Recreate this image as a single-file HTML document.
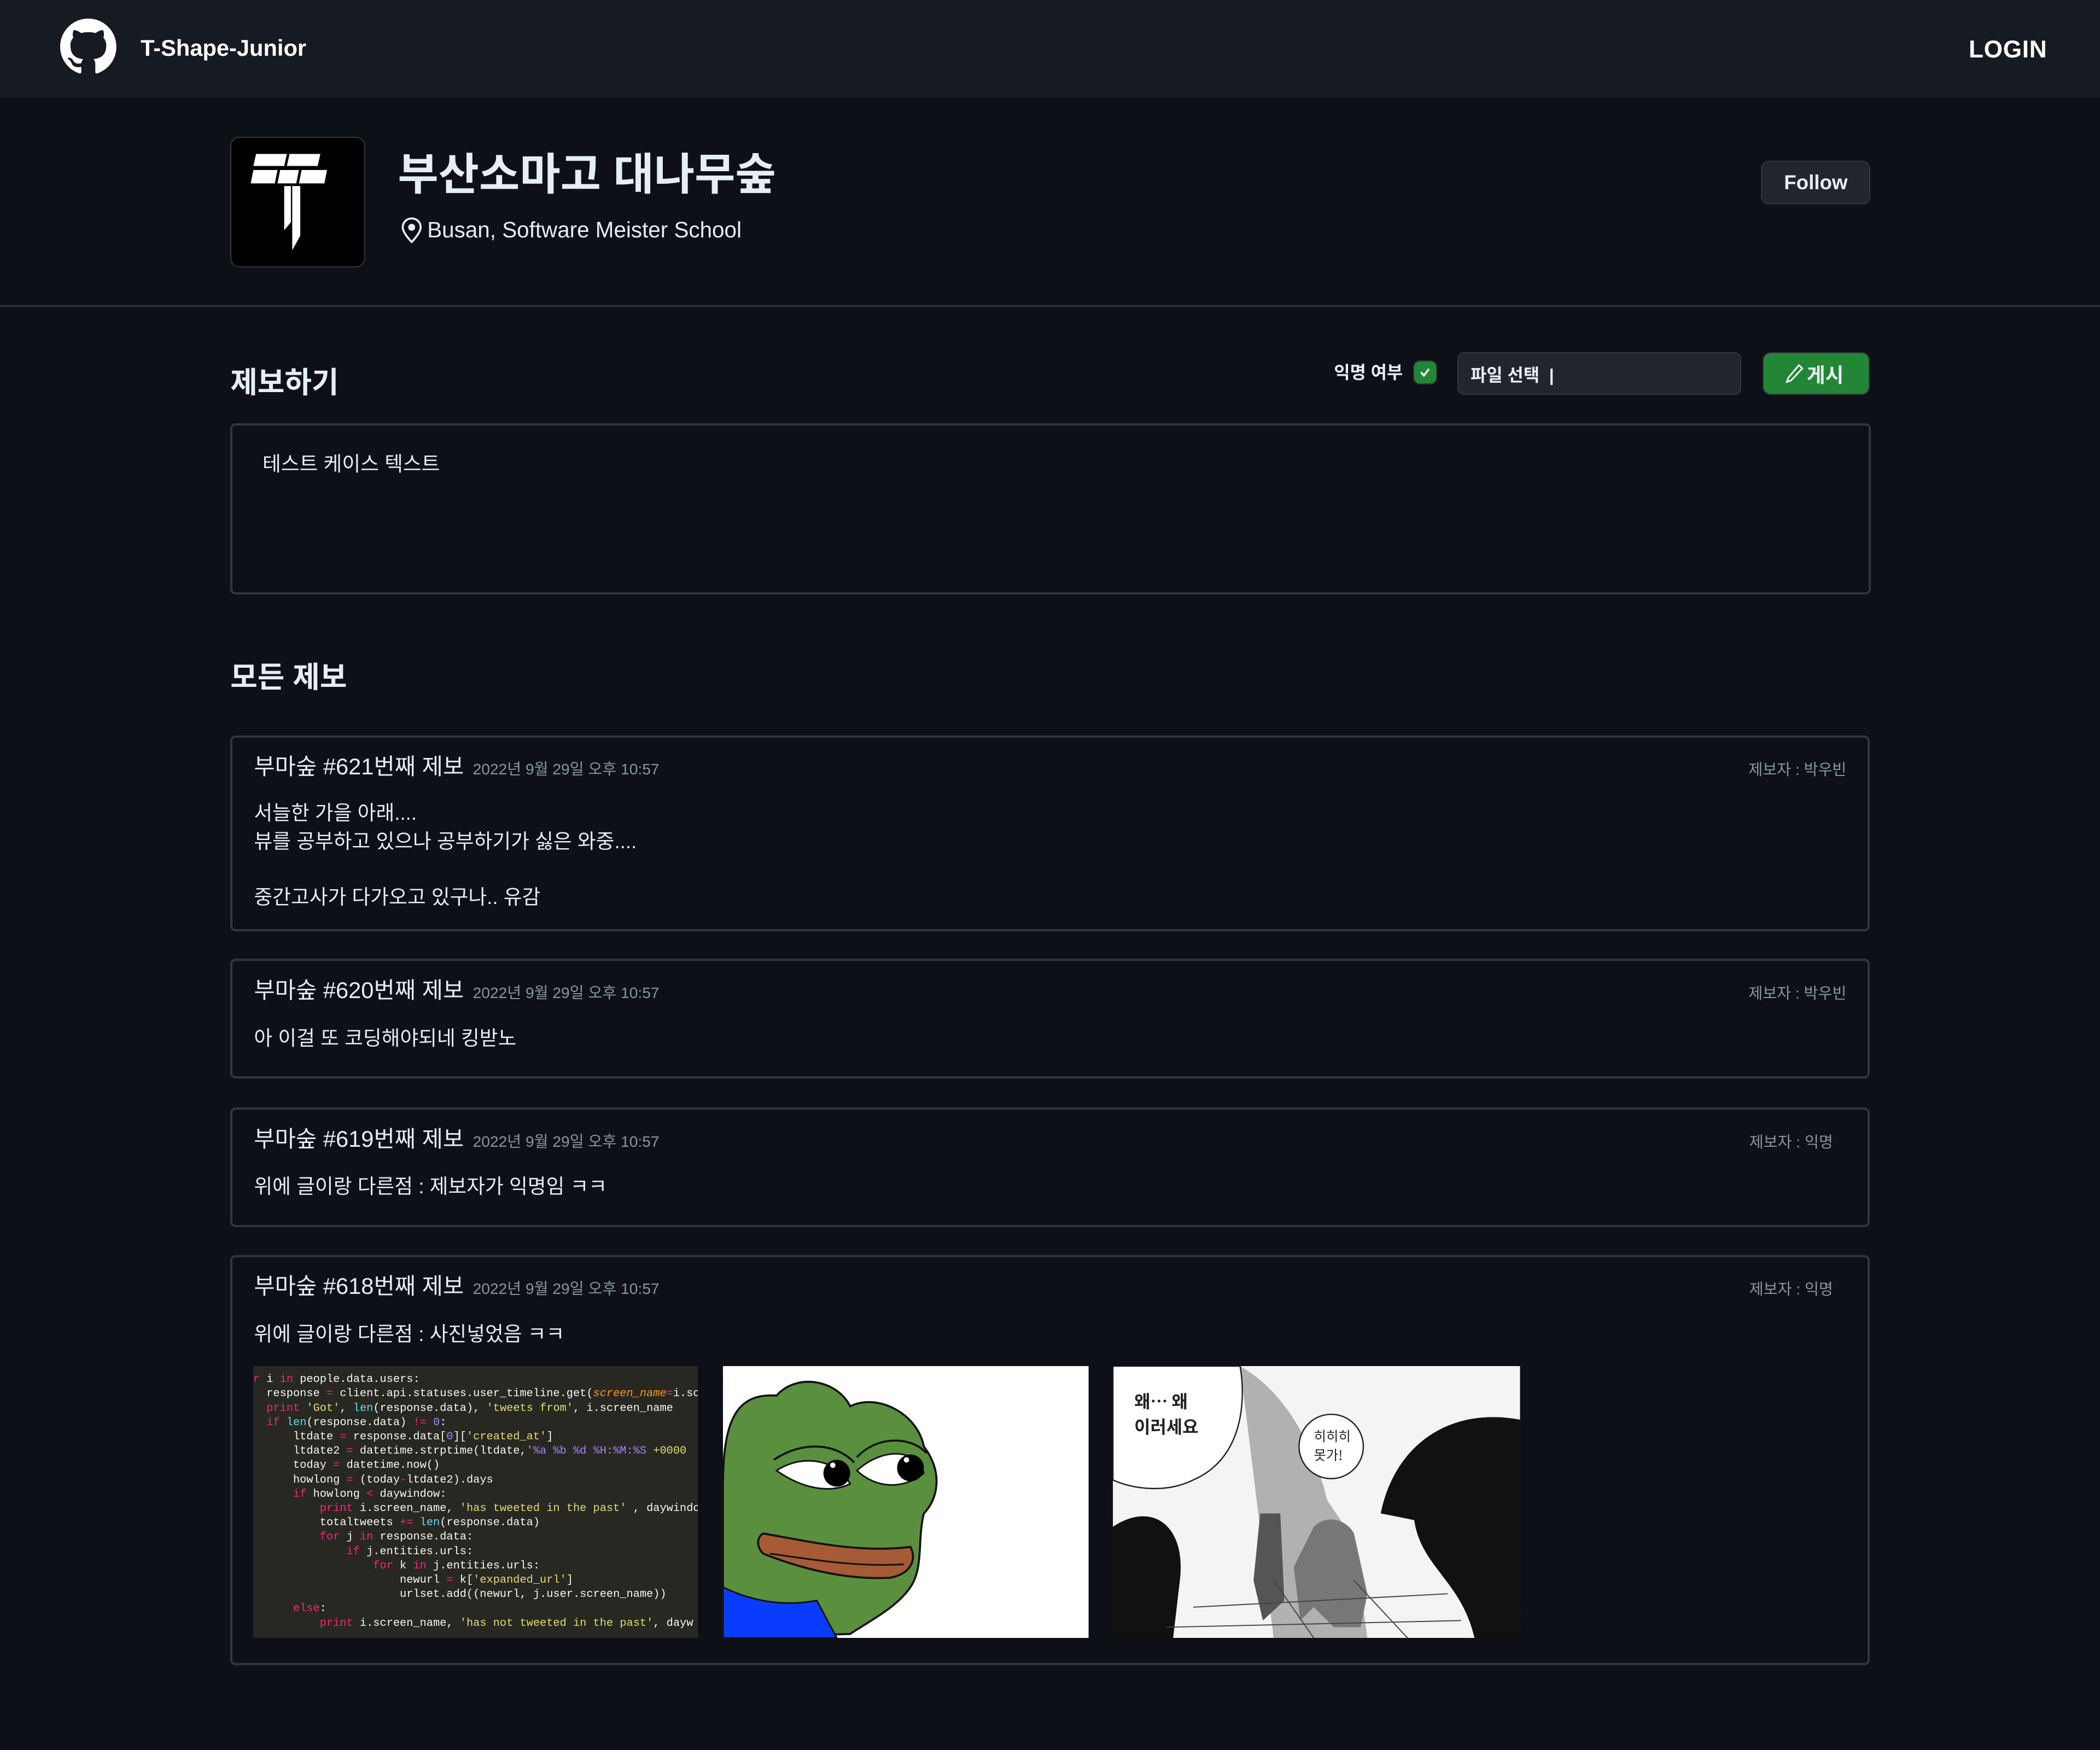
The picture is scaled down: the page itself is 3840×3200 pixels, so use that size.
<!DOCTYPE html>
<html><head><meta charset="utf-8">
<style>
html,body{margin:0;padding:0;background:#0d1117;width:3840px;height:3200px;overflow:hidden}
#z{zoom:2.449;width:1568px;height:1307px;position:relative;font-family:"Liberation Sans","Noto Sans CJK KR",sans-serif;color:#e6edf3}
.a{position:absolute;white-space:nowrap}
.hdr{position:absolute;left:0;top:0;width:1568px;height:73px;background:#161b22}
.card{position:absolute;left:172px;width:1221px;border:2px solid #30363d;border-radius:4px}
.t{position:absolute;left:16px;top:12px;font-size:17px;line-height:20px;white-space:nowrap}
.t span{font-size:11.5px;color:#8b949e;margin-left:2px}
.w{position:absolute;right:16px;top:15px;font-size:11.5px;color:#8b949e;white-space:nowrap}
.b{position:absolute;left:16px;font-size:15px;white-space:nowrap;line-height:21px}
.code{position:absolute;left:189px;top:1020px;width:332px;height:203px;background:#272822;overflow:hidden;font-family:"Liberation Mono",monospace;font-size:8.3px;line-height:10.7px;color:#f8f8f2;padding-top:5px;box-sizing:border-box}
.code div{white-space:pre}
.k{color:#f92672}.s{color:#e6db74}.f{color:#66d9ef}.n{color:#ae81ff}.o{color:#fd971f;font-style:italic}
</style></head><body><div id="z">
<div class="hdr"></div>
<svg class="a" style="left:45px;top:14px" width="42" height="42" viewBox="0 0 16 16"><path fill="#fff" d="M8 0C3.580 0 0 3.580 0 8c0 3.540 2.290 6.530 5.470 7.590.4.07.55-.17.55-.38 0-.19-.01-.82-.01-1.490-2.010.37-2.530-.49-2.690-.94-.09-.23-.48-.94-.82-1.130-.28-.15-.68-.52-.01-.53.63-.01 1.080.58 1.230.82.72 1.210 1.870.87 2.330.66.07-.52.28-.87.51-1.070-1.780-.2-3.640-.89-3.640-3.950 0-.87.31-1.590.82-2.150-.08-.2-.36-1.020.08-2.120 0 0 .67-.21 2.200.82.64-.18 1.320-.27 2-.27.68 0 1.360.09 2 .27 1.530-1.040 2.200-.82 2.200-.82.44 1.100.16 1.920.08 2.120.51.56.82 1.270.82 2.150 0 3.070-1.870 3.750-3.650 3.950.29.25.54.73.54 1.480 0 1.070-.01 1.930-.01 2.200 0 .21.15.46.55.38A8.013 8.013 0 0016 8c0-4.420-3.580-8-8-8z"/></svg>
<div class="a" style="left:105px;top:26px;font-size:17px;font-weight:bold;color:#fff">T-Shape-Junior</div>
<div class="a" style="left:1470px;top:27px;font-size:18px;font-weight:bold;color:#fff;letter-spacing:.3px">LOGIN</div>

<div class="a" style="left:172px;top:102px;width:99px;height:96px;background:#000;border:1px solid #30363d;border-radius:7px"></div>
<svg class="a" style="left:186px;top:114px" width="74" height="74" viewBox="0 0 74 74"><g fill="#fff"><polygon points="5,1 28,1 26,10 3,10"/><polygon points="30,1 53,1 51,10 28,10"/><polygon points="3,13 21,13 19,23 1,23"/><polygon points="23,13 37,13 35,23 21,23"/><polygon points="39,13 58,13 56,23 37,23"/><polygon points="26,25 31,25 31,52 26,58"/><polygon points="32,25 38,25 38,62 32,73 32,50"/></g></svg>
<div class="a" style="left:297px;top:109px;font-size:33px;font-weight:bold;color:#e6edf3;line-height:44px">부산소마고 대나무숲</div>
<svg class="a" style="left:299px;top:162px" width="17" height="20" viewBox="0 0 17 20"><path d="M8.5 1C4.600 1 1.800 4 1.800 7.600c0 4.300 6.700 11 6.700 11s6.700-6.700 6.700-11C15.200 4 12.400 1 8.500 1z" fill="none" stroke="#e6edf3" stroke-width="1.500"/><circle cx="8.5" cy="7.6" r="2.6" fill="#e6edf3"/></svg>
<div class="a" style="left:319px;top:162px;font-size:16.5px;color:#e6edf3">Busan, Software Meister School</div>
<div class="a" style="left:1315px;top:120px;width:80px;height:31px;background:#21262d;border:1px solid #30363d;border-radius:6px;font-size:15px;font-weight:bold;text-align:center;line-height:31px">Follow</div>
<div class="a" style="left:0;top:228px;width:1568px;height:1px;background:#30363d"></div>

<div class="a" style="left:172px;top:268px;font-size:22px;font-weight:bold">제보하기</div>
<div class="a" style="left:996px;top:268px;font-size:13px;font-weight:bold">익명 여부</div>
<div class="a" style="left:1055px;top:269px;width:18px;height:18px;background:#238636;border:1px solid #30363d;border-radius:5px;box-sizing:border-box"></div>
<svg class="a" style="left:1058px;top:272px" width="12" height="12" viewBox="0 0 12 12"><path d="M3 6l2.2 2.5L9 3.5" fill="none" stroke="#fff" stroke-width="1.4"/></svg>
<div class="a" style="left:1088px;top:263px;width:212px;height:32px;background:#21262d;border:1px solid #30363d;border-radius:5px;box-sizing:border-box"></div>
<div class="a" style="left:1098px;top:270px;font-size:13px;font-weight:bold">파일 선택 &nbsp;|</div>
<div class="a" style="left:1316px;top:263px;width:80px;height:32px;background:#238636;border:1px solid #30363d;border-radius:6px;box-sizing:border-box"></div>
<svg class="a" style="left:1333px;top:271px" width="14" height="16" viewBox="0 0 14 16"><path d="M10 1.5l2.5 2.5L4 13l-3 1 1-3z" fill="none" stroke="#fff" stroke-width="1.2"/></svg>
<div class="a" style="left:1349px;top:268px;font-size:15px;font-weight:bold">게시</div>
<div class="a" style="left:172px;top:316px;width:1225px;height:128px;border:2px solid #30363d;border-radius:4px;box-sizing:border-box"></div>
<div class="a" style="left:196px;top:334px;font-size:15px">테스트 케이스 텍스트</div>

<div class="a" style="left:172px;top:488px;font-size:22px;font-weight:bold">모든 제보</div>

<div class="card" style="top:549px;height:143px">
<div class="t">부마숲 #621번째 제보 <span>2022년 9월 29일 오후 10:57</span></div>
<div class="w">제보자 : 박우빈</div>
<div class="b" style="top:46px">서늘한 가을 아래....<br>뷰를 공부하고 있으나 공부하기가 싫은 와중....<br><br>중간고사가 다가오고 있구나.. 유감</div>
</div>
<div class="card" style="top:716px;height:86px">
<div class="t">부마숲 #620번째 제보 <span>2022년 9월 29일 오후 10:57</span></div>
<div class="w">제보자 : 박우빈</div>
<div class="b" style="top:47px">아 이걸 또 코딩해야되네 킹받노</div>
</div>
<div class="card" style="top:827px;height:86px">
<div class="t">부마숲 #619번째 제보 <span>2022년 9월 29일 오후 10:57</span></div>
<div class="w" style="right:26px">제보자 : 익명</div>
<div class="b" style="top:47px">위에 글이랑 다른점 : 제보자가 익명임 ㅋㅋ</div>
</div>
<div class="card" style="top:937px;height:303px">
<div class="t">부마숲 #618번째 제보 <span>2022년 9월 29일 오후 10:57</span></div>
<div class="w" style="right:26px">제보자 : 익명</div>
<div class="b" style="top:47px">위에 글이랑 다른점 : 사진넣었음 ㅋㅋ</div>
</div>

<div class="code">
<div><span class="k">r</span> i <span class="k">in</span> people.data.users:</div>
<div>  response <span class="k">=</span> client.api.statuses.user_timeline.get(<span class="o">screen_name</span><span class="k">=</span>i.sc</div>
<div>  <span class="k">print</span> <span class="s">'Got'</span>, <span class="f">len</span>(response.data), <span class="s">'tweets from'</span>, i.screen_name</div>
<div>  <span class="k">if</span> <span class="f">len</span>(response.data) <span class="k">!=</span> <span class="n">0</span>:</div>
<div>      ltdate <span class="k">=</span> response.data[<span class="n">0</span>][<span class="s">'created_at'</span>]</div>
<div>      ltdate2 <span class="k">=</span> datetime.strptime(ltdate,<span class="n">'%a %b %d %H:%M:%S</span> <span class="s">+0000</span></div>
<div>      today <span class="k">=</span> datetime.now()</div>
<div>      howlong <span class="k">=</span> (today<span class="k">-</span>ltdate2).days</div>
<div>      <span class="k">if</span> howlong <span class="k">&lt;</span> daywindow:</div>
<div>          <span class="k">print</span> i.screen_name, <span class="s">'has tweeted in the past'</span> , daywindo</div>
<div>          totaltweets <span class="k">+=</span> <span class="f">len</span>(response.data)</div>
<div>          <span class="k">for</span> j <span class="k">in</span> response.data:</div>
<div>              <span class="k">if</span> j.entities.urls:</div>
<div>                  <span class="k">for</span> k <span class="k">in</span> j.entities.urls:</div>
<div>                      newurl <span class="k">=</span> k[<span class="s">'expanded_url'</span>]</div>
<div>                      urlset.add((newurl, j.user.screen_name))</div>
<div>      <span class="k">else</span>:</div>
<div>          <span class="k">print</span> i.screen_name, <span class="s">'has not tweeted in the past'</span>, dayw</div>
</div>

<svg class="a" style="left:540px;top:1020px" width="273" height="203" viewBox="0 0 273 203">
<rect width="273" height="203" fill="#fff"/>
<path d="M0 195 L0 90 C0 40 10 20 40 22 C55 5 85 10 95 30 C115 20 145 35 150 60 C165 80 160 100 150 110 C145 130 150 150 140 165 C130 180 110 190 95 200 L0 203Z" fill="#5a8f3e" stroke="#111" stroke-width="1.5"/>
<path d="M0 165 C20 175 45 180 70 175 L85 203 L0 203Z" fill="#0a3cff" stroke="#111" stroke-width="1.2"/>
<path d="M30 125 C60 130 100 140 140 135 C145 145 140 155 125 158 C90 160 55 150 30 140 C25 135 25 128 30 125Z" fill="#a65a35" stroke="#111" stroke-width="1.5"/>
<path d="M35 140 C70 145 100 150 135 148" fill="none" stroke="#111" stroke-width="1.2"/>
<path d="M40 78 C60 65 85 70 95 88 C80 95 60 92 40 78Z" fill="#fff" stroke="#111" stroke-width="1.2"/>
<path d="M100 78 C120 60 145 62 150 80 C135 92 115 92 100 78Z" fill="#fff" stroke="#111" stroke-width="1.2"/>
<circle cx="85" cy="80" r="10" fill="#000"/><circle cx="140" cy="76" r="10" fill="#000"/>
<circle cx="82" cy="74" r="2" fill="#fff"/><circle cx="137" cy="70" r="2" fill="#fff"/>
<path d="M38 70 C60 55 85 58 98 72 M100 68 C115 52 140 52 152 65" fill="none" stroke="#111" stroke-width="1.5"/>
</svg>

<svg class="a" style="left:831px;top:1020px" width="304" height="203" viewBox="0 0 304 203">
<rect width="304" height="203" fill="#f4f4f4"/>
<path d="M95 0 C130 20 150 60 160 100 L180 130 L190 203 L120 203 Z" fill="#7a7a7a" opacity=".55"/>
<path d="M0 0 L95 0 C100 30 95 70 60 85 C40 95 15 92 0 85Z" fill="#fff" stroke="#222" stroke-width="1"/>
<text x="16" y="31" font-family="Noto Sans CJK KR,sans-serif" font-size="13" font-weight="bold" fill="#222">왜… 왜</text>
<text x="16" y="50" font-family="Noto Sans CJK KR,sans-serif" font-size="13" font-weight="bold" fill="#222">이러세요</text>
<ellipse cx="163" cy="60" rx="24" ry="24" fill="#fff" stroke="#222"/>
<text x="150" y="56" font-family="Noto Sans CJK KR,sans-serif" font-size="10" fill="#222">히히히</text>
<text x="150" y="70" font-family="Noto Sans CJK KR,sans-serif" font-size="10" fill="#222">못가!</text>
<path d="M0 120 C30 100 55 120 50 160 L45 203 L0 203Z" fill="#111"/>
<path d="M200 110 C210 60 250 30 304 40 L304 203 L270 203 C260 160 230 150 225 115Z" fill="#111"/>
<path d="M150 120 C160 110 175 115 180 125 L190 170 L185 195 L165 195 L150 180 L140 190 L135 150Z" fill="#777"/>
<path d="M110 110 L125 110 L128 175 L112 190 L105 160Z" fill="#555"/>
<path d="M60 180 L250 170 M40 195 L260 190 M120 160 L150 203 M180 160 L220 203" stroke="#444" stroke-width=".8" fill="none"/>
</svg>
</div></body></html>
